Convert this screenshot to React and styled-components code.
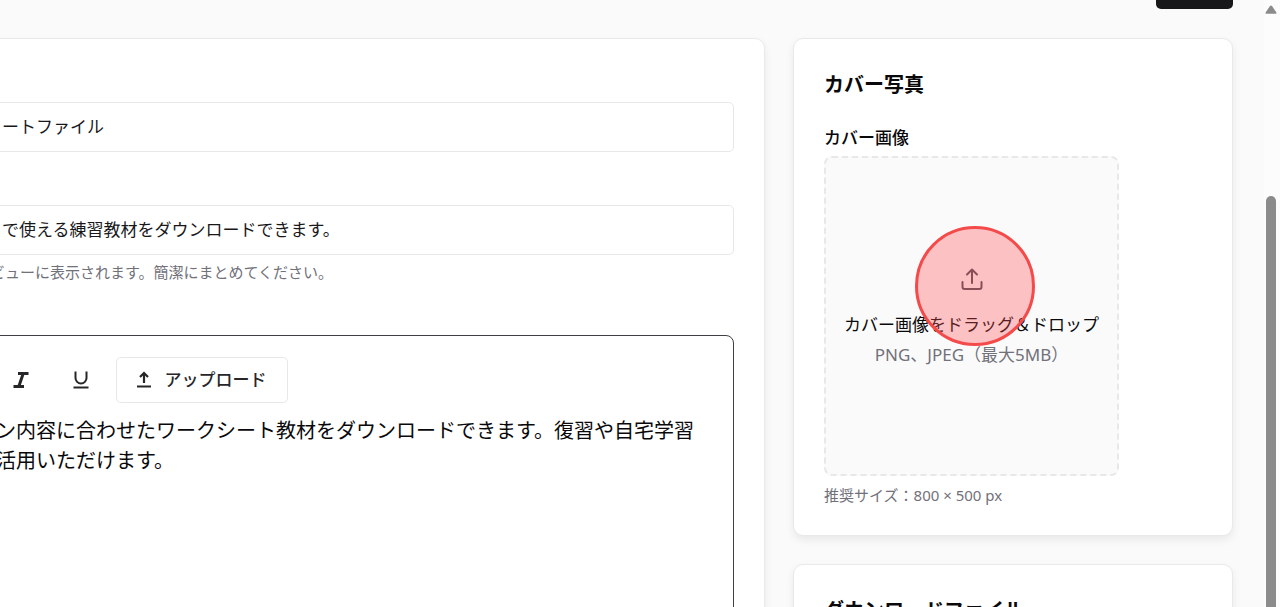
import React from 'react';
import styled, { createGlobalStyle } from 'styled-components';

const GlobalStyle = createGlobalStyle`
  * {
    box-sizing: border-box;
  }

  body {
    margin: 0;
    background: #fafafa;
    color: #09090b;
    font-family: 'Noto Sans', 'Noto Sans CJK JP', sans-serif;
    overflow: hidden;
  }

  button,
  input,
  textarea {
    font: inherit;
    color: inherit;
  }
`;

const Page = styled.div`
  display: flex;
  height: 100vh;
  overflow: hidden;
`;

const Content = styled.div`
  flex: 1;
  min-width: 0;
  padding-right: 31px;
`;

const Header = styled.header`
  display: flex;
  justify-content: flex-end;
  align-items: flex-end;
  height: 9px;
  margin-bottom: 29px;
`;

const SaveButton = styled.button`
  flex: none;
  width: 77px;
  height: 45px;
  border: 0;
  border-radius: 5px;
  background: #18181b;
`;

const Columns = styled.main`
  display: grid;
  grid-template-columns: minmax(0, 1fr) 440px;
  gap: 28px;
`;

const Card = styled.section`
  padding: 30px;
  border: 1px solid #e9e9eb;
  border-radius: 10px;
  background: #fff;
  box-shadow: 0 4px 8px rgba(0, 0, 0, 0.07);
`;

// runs past the left edge of the scrolled view
const FormCard = styled(Card)`
  display: flex;
  flex-direction: column;
  min-height: 640px;
  margin-left: -48px;
  padding-top: 63px;
`;

const TextInput = styled.input`
  width: 100%;
  height: 50px;
  padding: 0 18px 3px;
  border: 1px solid #e8e8ea;
  border-radius: 5px;
  background: #fff;
  color: #18181b;
  font-size: 17px;
  outline: none;

  & + & {
    margin-top: 53px;
  }
`;

const Hint = styled.p`
  margin: 9px 0 0;
  color: #71717a;
  font-size: 15px;
  line-height: 20px;
`;

const FieldHint = styled(Hint)`
  margin-top: 7px;
  padding-left: 7px;
`;

const Editor = styled.div`
  display: flex;
  flex: 1;
  flex-direction: column;
  margin-top: 53px;
  padding: 21px 12px 0;
  border: 1px solid #3f3f46;
  border-radius: 8px;
`;

const Toolbar = styled.div`
  display: flex;
  align-items: center;
  gap: 10px;
  color: #27272a;
`;

const IconButton = styled.button`
  display: flex;
  align-items: center;
  justify-content: center;
  width: 50px;
  height: 46px;
  padding: 0;
  border: 0;
  background: none;
`;

const UploadButton = styled.button`
  display: flex;
  align-items: center;
  justify-content: center;
  gap: 12px;
  width: 172px;
  height: 46px;
  padding: 0 3px 3px 0;
  border: 1px solid #e8e8ea;
  border-radius: 5px;
  background: #fff;
  font-size: 17px;
  font-weight: 500;
`;

const EditorText = styled.textarea`
  flex: 1;
  width: 100%;
  margin-top: 13px;
  padding: 0;
  border: 0;
  background: none;
  font-size: 20px;
  line-height: 30px;
  outline: none;
  resize: none;
`;

const Aside = styled.aside`
  display: flex;
  flex-direction: column;
  gap: 28px;
`;

const CardTitle = styled.h2`
  margin: 0;
  font-size: 20px;
  font-weight: 700;
  line-height: 32px;
`;

const Label = styled.label`
  display: block;
  margin: 24px 0 5px;
  font-size: 17px;
  font-weight: 500;
  line-height: 26px;
`;

const DropZone = styled.button`
  position: relative;
  display: flex;
  flex-direction: column;
  align-items: center;
  justify-content: center;
  width: 295px;
  height: 320px;
  padding: 5px 0 0;
  border: 2px dashed #e8e8ea;
  border-radius: 8px;
  background: #fafafa;
  font-size: 17px;
  line-height: 30px;
`;

const DropIcon = styled.svg`
  margin-bottom: 19px;
  color: #52525b;
`;

const DropNote = styled.span`
  color: #71717a;
`;

const ClickMarker = styled.span`
  position: absolute;
  top: 68px;
  left: 89px;
  width: 120px;
  height: 120px;
  border: 3px solid #f44a4a;
  border-radius: 50%;
  background: rgba(255, 76, 80, 0.32);
`;

const ScrollTrack = styled.div`
  display: flex;
  flex-direction: column;
  align-items: center;
  width: 16px;
  padding: 5px 2px 0 0;
  background: #fcfcfc;
`;

const ScrollThumb = styled.div`
  flex: 1;
  width: 10px;
  margin-top: 182px;
  border-radius: 5px 5px 0 0;
  background: #8b8b8b;
`;

const App = () => (
  <>
    <GlobalStyle />
    <Page>
      <Content>
        <Header>
          <SaveButton type="button" aria-label="保存" />
        </Header>
        <Columns>
          <FormCard>
            <TextInput aria-label="タイトル" defaultValue="ートファイル" />
            <TextInput
              aria-label="説明"
              defaultValue="で使える練習教材をダウンロードできます。"
            />
            <FieldHint>ビューに表示されます。簡潔にまとめてください。</FieldHint>
            <Editor>
              <Toolbar>
                <IconButton type="button" aria-label="斜体">
                  <svg width="20" height="20" viewBox="0 0 20 20" fill="none" stroke="currentColor" strokeWidth="3">
                    <path d="M7 3.500h10.500M2.500 16.500h10.500M12.200 3.500l-4.400 13" />
                  </svg>
                </IconButton>
                <IconButton type="button" aria-label="下線">
                  <svg width="20" height="20" viewBox="0 0 20 20" fill="none" stroke="currentColor" strokeWidth="2">
                    <path d="M4.500 1.500v6.500a5.500 5.500 0 0 0 11 0V1.500M2.500 17.500h15" />
                  </svg>
                </IconButton>
                <UploadButton type="button">
                  <svg width="18" height="18" viewBox="0 0 18 18" fill="none" stroke="currentColor" strokeWidth="2.200">
                    <path d="M9 13V3M5 7l4-4 4 4M2 16.500h14" />
                  </svg>
                  アップロード
                </UploadButton>
              </Toolbar>
              <EditorText
                aria-label="本文"
                defaultValue={
                  'ン内容に合わせたワークシート教材をダウンロードできます。復習や自宅学習\n活用いただけます。'
                }
              />
            </Editor>
          </FormCard>
          <Aside>
            <Card>
              <CardTitle>カバー写真</CardTitle>
              <Label htmlFor="cover">カバー画像</Label>
              <DropZone id="cover" type="button">
                <DropIcon
                  width="24"
                  height="24"
                  viewBox="0 0 24 24"
                  fill="none"
                  stroke="currentColor"
                  strokeWidth="2"
                  strokeLinecap="round"
                  strokeLinejoin="round"
                >
                  <path d="M12 16V2.500M7 7.500l5-5 5 5M2.500 15v5a2 2 0 0 0 2 2h15a2 2 0 0 0 2-2v-5" />
                </DropIcon>
                <span>カバー画像をドラッグ＆ドロップ</span>
                <DropNote>PNG、JPEG（最大5MB）</DropNote>
                <ClickMarker />
              </DropZone>
              <Hint>推奨サイズ：800 × 500 px</Hint>
            </Card>
            <Card>
              <CardTitle>ダウンロードファイル</CardTitle>
            </Card>
          </Aside>
        </Columns>
      </Content>
      <ScrollTrack>
        <svg width="12" height="9" viewBox="0 0 12 9" fill="#8b8b8b">
          <path d="M6 .5Q6.600.5 7 1l4.400 6.400q.6 1.300-.8 1.300H1.400Q0 8.700.6 7.400L5 1q.4-.5 1-.5z" />
        </svg>
        <ScrollThumb />
      </ScrollTrack>
    </Page>
  </>
);

export default App;
